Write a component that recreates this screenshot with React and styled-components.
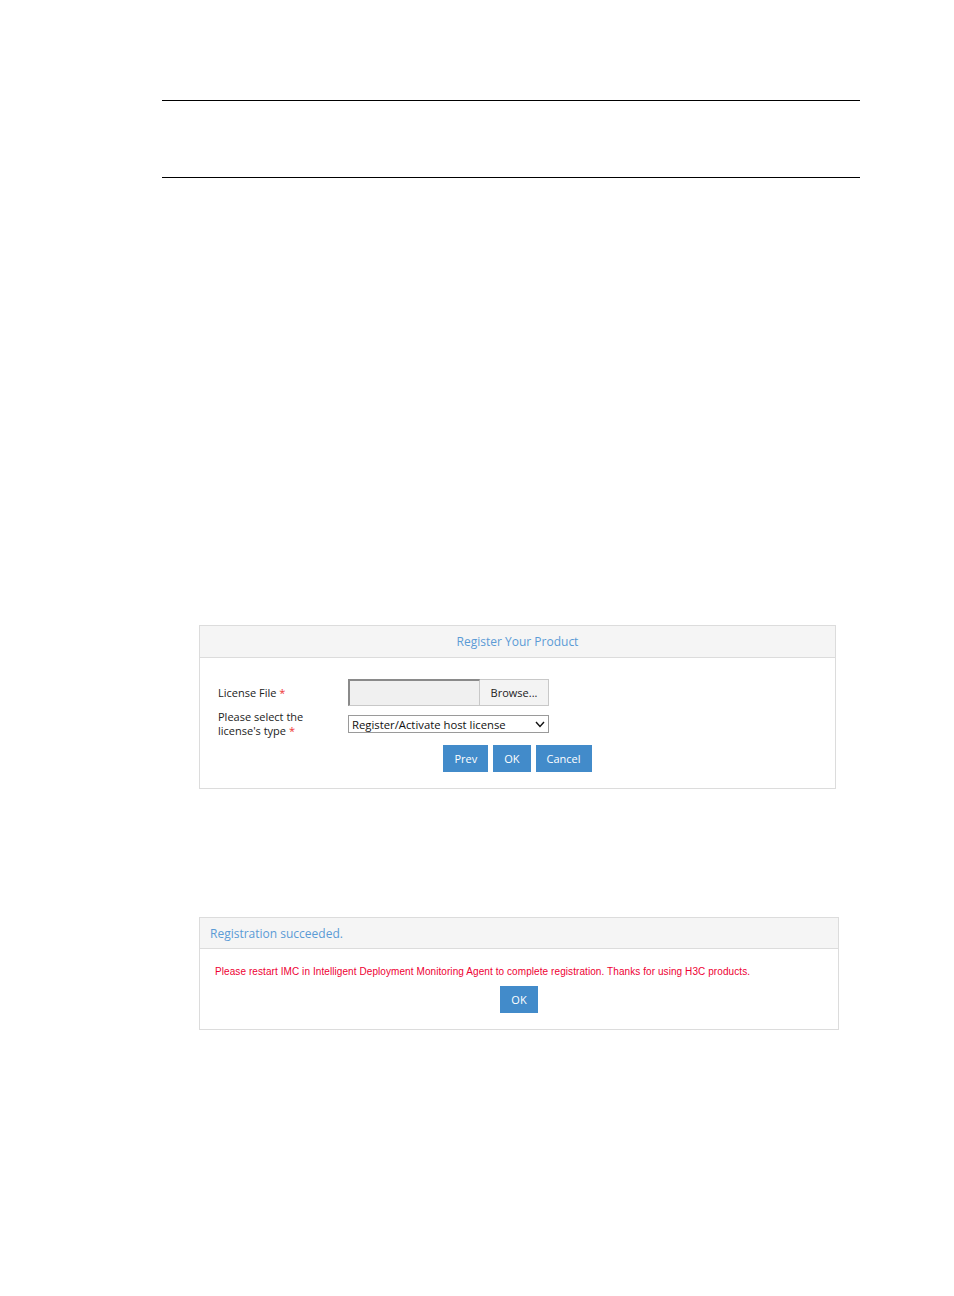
import React from "react";
import styled, { createGlobalStyle } from "styled-components";

const GlobalStyle = createGlobalStyle`
  body {
    margin: 0;
    background: #fff;
    font-family: "Open Sans", "Noto Sans", sans-serif;
  }
`;

const Page = styled.div`
  width: 954px;
  min-height: 1296px;
  padding-top: 100px;
  box-sizing: border-box;
`;

const Rules = styled.div`
  margin-left: 162px;
  width: 698px;
  height: 76px;
  border-top: 1px solid #000;
  border-bottom: 1px solid #000;
`;

const Panel = styled.section`
  margin-left: 199px;
  width: ${(p) => p.$width}px;
  margin-top: ${(p) => p.$top}px;
  border: 1px solid #dcdcdc;
  box-sizing: border-box;
  background: #fff;
`;

const PanelHead = styled.div`
  height: ${(p) => p.$height}px;
  background: #f5f5f5;
  border-bottom: 1px solid #dcdcdc;
  display: flex;
  align-items: center;
  justify-content: ${(p) => (p.$center ? "center" : "flex-start")};
  padding: 0 10px;
  color: #5b9bd5;
  font-size: 12px;
`;

const FormBody = styled.div`
  padding: 21px 18px 16px;
  display: flex;
  flex-direction: column;
`;

const FormRow = styled.div`
  display: grid;
  grid-template-columns: 130px auto;
  align-items: center;
  margin-bottom: ${(p) => p.$gap}px;
`;

const Label = styled.div`
  font-size: 11px;
  line-height: 14px;
  color: #222;
`;

const Star = styled.span`
  color: #e33;
`;

const FileBox = styled.div`
  display: flex;
  width: 201px;
  height: 27px;
`;

const FilePath = styled.div`
  width: 132px;
  box-sizing: border-box;
  background: #f0f0f0;
  border: 1px solid #c8c8c8;
  border-top: 2px solid #8a8a8a;
  border-left: 2px solid #8a8a8a;
`;

const BrowseButton = styled.div`
  flex: 1;
  box-sizing: border-box;
  background: #f3f3f3;
  border: 1px solid #c8c8c8;
  border-left: none;
  display: flex;
  align-items: center;
  justify-content: center;
  font-size: 11px;
  color: #222;
`;

const SelectBox = styled.div`
  width: 201px;
  height: 18px;
  box-sizing: border-box;
  border: 1px solid #9a9a9a;
  display: flex;
  align-items: center;
  justify-content: space-between;
  padding: 0 3px 0 3px;
  font-size: 11.3px;
  color: #111;
`;

const Buttons = styled.div`
  display: flex;
  justify-content: center;
  gap: 5px;
`;

const Button = styled.div`
  height: 27px;
  padding: 0 ${(p) => p.$pad}px;
  background: #428bca;
  color: #fff;
  font-size: 11px;
  display: flex;
  align-items: center;
  justify-content: center;
`;

const NoticeBody = styled.div`
  padding: 16px 15px 16px;
  display: flex;
  flex-direction: column;
  align-items: center;
`;

const Notice = styled.div`
  align-self: flex-start;
  font-family: "Liberation Sans", Arial, sans-serif;
  font-size: 10px;
  letter-spacing: 0.08px;
  color: #ee0033;
  line-height: 14px;
  margin-bottom: 7px;
`;

const Chevron = () => (
  <svg width="10" height="7" viewBox="0 0 10 7">
    <path d="M1 1 L5 5.5 L9 1" fill="none" stroke="#111" strokeWidth="1.4" />
  </svg>
);

export default function App() {
  return (
    <Page>
      <GlobalStyle />
      <Rules />

      <Panel $width={637} $top={447}>
        <PanelHead $height={31} $center>Register Your Product</PanelHead>
        <FormBody>
          <FormRow $gap={4}>
            <Label>
              License File <Star>*</Star>
            </Label>
            <FileBox>
              <FilePath />
              <BrowseButton>Browse...</BrowseButton>
            </FileBox>
          </FormRow>
          <FormRow $gap={7}>
            <Label>
              Please select the
              <br />
              license's type <Star>*</Star>
            </Label>
            <SelectBox>
              Register/Activate host license
              <Chevron />
            </SelectBox>
          </FormRow>
          <Buttons>
            <Button $pad={11}>Prev</Button>
            <Button $pad={11}>OK</Button>
            <Button $pad={11}>Cancel</Button>
          </Buttons>
        </FormBody>
      </Panel>

      <Panel $width={640} $top={128}>
        <PanelHead $height={30}>Registration succeeded.</PanelHead>
        <NoticeBody>
          <Notice>
            Please restart IMC in Intelligent Deployment Monitoring Agent to
            complete registration. Thanks for using H3C products.
          </Notice>
          <Button $pad={11}>OK</Button>
        </NoticeBody>
      </Panel>
    </Page>
  );
}
